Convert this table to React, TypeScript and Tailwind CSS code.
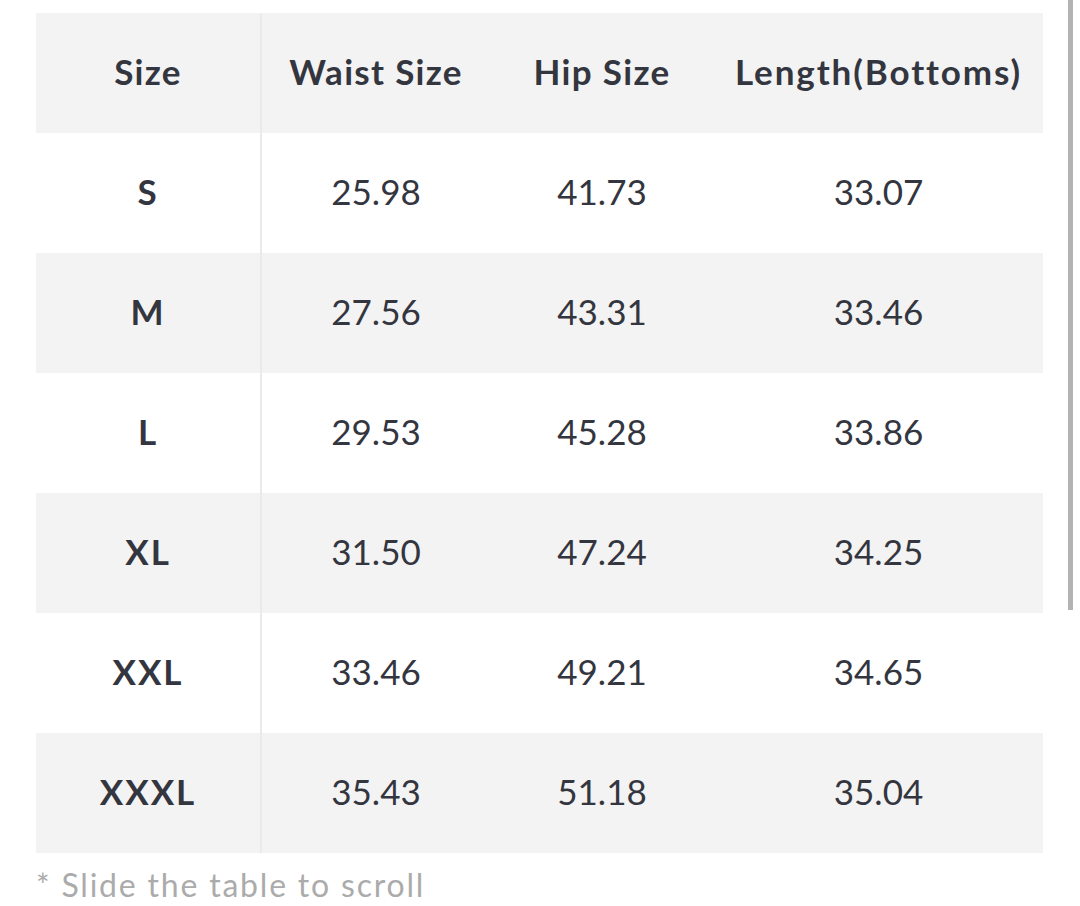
import React from "react";

const rows = [
  ["S", "25.98", "41.73", "33.07"],
  ["M", "27.56", "43.31", "33.46"],
  ["L", "29.53", "45.28", "33.86"],
  ["XL", "31.50", "47.24", "34.25"],
  ["XXL", "33.46", "49.21", "34.65"],
  ["XXXL", "35.43", "51.18", "35.04"],
];

export default function App() {
  return (
    <div
      className="relative w-[1080px] h-[906px] bg-white overflow-hidden text-[#34363f]"
      style={{ fontFamily: "Lato, 'Open Sans', sans-serif" }}
    >
      <div className="absolute right-[7px] top-0 w-[5px] h-[610px] bg-[#b3b3b3]" />
      <div className="pt-[13px] pl-[36px] w-[1043px]">
        <div className="grid grid-cols-[226px_228px_224px_1fr] h-[120px] bg-[#f3f3f3] text-[35px] font-bold tracking-[1.3px] pb-[4px]">
          <div className="flex items-center justify-center border-r-2 border-[#eaeaea] -mb-[4px] pb-[4px]">Size</div>
          <div className="flex items-center justify-center">Waist Size</div>
          <div className="flex items-center justify-center">Hip Size</div>
          <div className="flex items-center justify-center tracking-[1.9px]">Length(Bottoms)</div>
        </div>
        {rows.map((r, i) => (
          <div
            key={r[0]}
            className={`grid grid-cols-[226px_228px_224px_1fr] h-[120px] text-[35px] ${
              i % 2 === 1 ? "bg-[#f3f3f3]" : "bg-white"
            }`}
          >
            <div className="flex items-center justify-center pb-[4px] font-bold tracking-[2px] border-r-2 border-[#eaeaea]">{r[0]}</div>
            <div className="flex items-center justify-center pb-[4px]">{r[1]}</div>
            <div className="flex items-center justify-center pb-[4px]">{r[2]}</div>
            <div className="flex items-center justify-center pb-[4px]">{r[3]}</div>
          </div>
        ))}
        <div className="mt-[12px] text-[32px] leading-[40px] tracking-[1.8px] text-[#ababab]">* Slide the table to scroll</div>
      </div>
    </div>
  );
}
